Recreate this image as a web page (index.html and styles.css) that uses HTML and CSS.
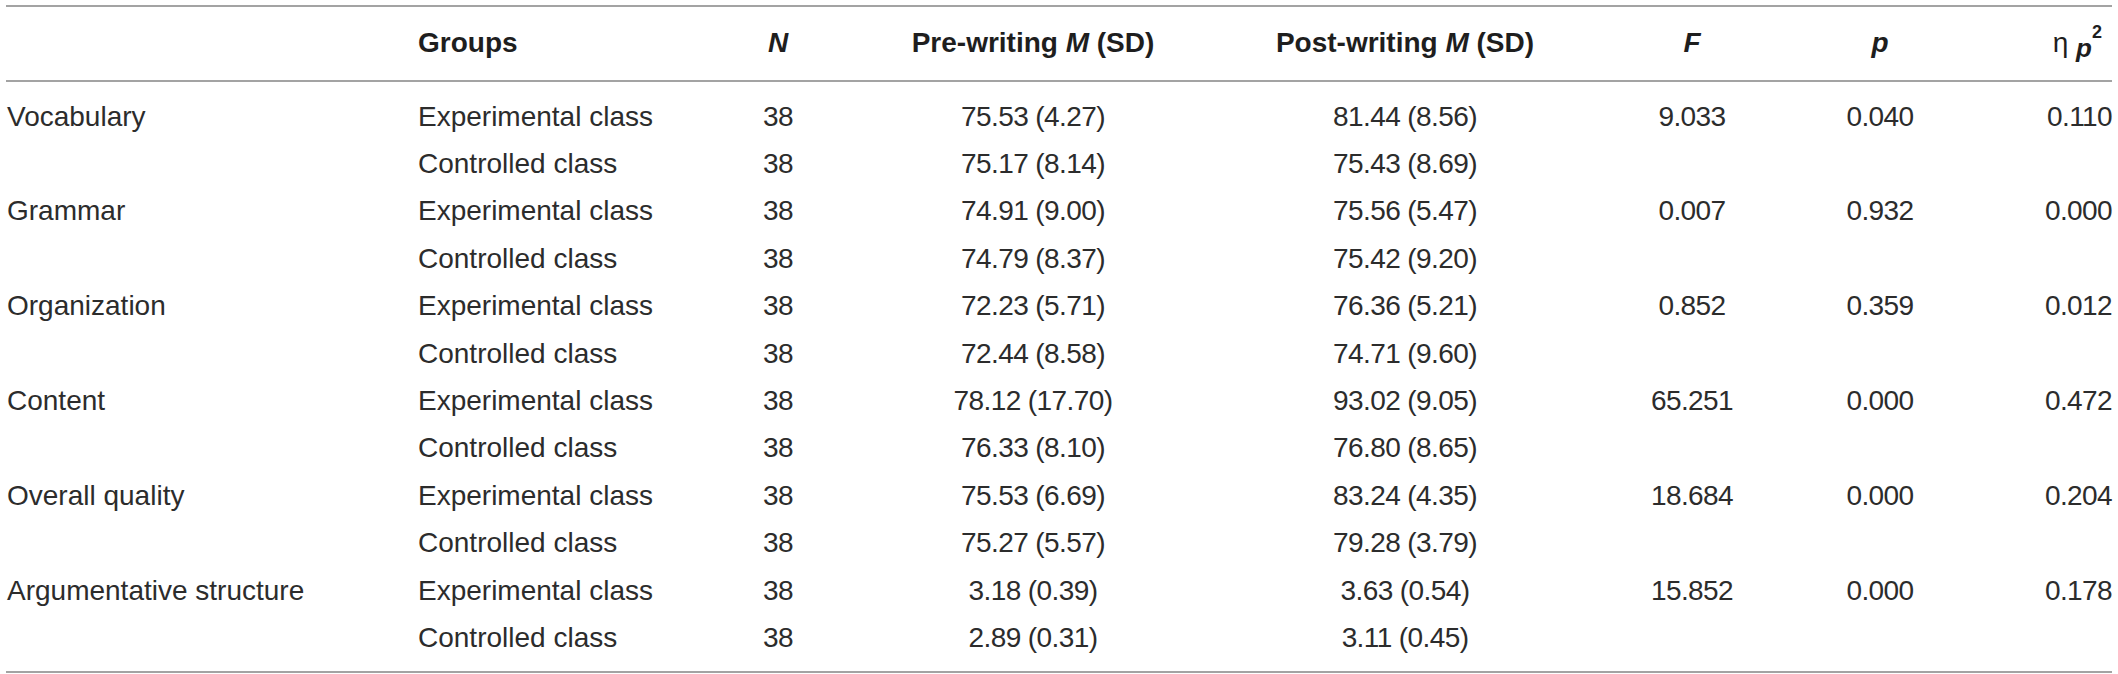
FILE: index.html
```html
<!DOCTYPE html>
<html lang="en">
<head>
<meta charset="utf-8">
<title>Table</title>
<link rel="stylesheet" href="styles.css">
</head>
<body>
<table class="stats">
  <colgroup>
    <col class="c-measure">
    <col class="c-group">
    <col class="c-n">
    <col class="c-pre">
    <col class="c-post">
    <col class="c-f">
    <col class="c-p">
    <col class="c-eta">
  </colgroup>
  <thead>
    <tr>
      <th class="left"></th>
      <th class="left">Groups</th>
      <th><i>N</i></th>
      <th>Pre-writing <i>M</i> (SD)</th>
      <th>Post-writing <i>M</i> (SD)</th>
      <th><i>F</i></th>
      <th><i>p</i></th>
      <th class="eta"><span class="eta-sym">η</span> <i class="sub">p</i><sup>2</sup></th>
    </tr>
  </thead>
  <tbody>
    <tr class="first">
      <td class="left">Vocabulary</td><td class="left">Experimental class</td><td class="num">38</td><td class="num">75.53 (4.27)</td><td class="num">81.44 (8.56)</td><td class="num">9.033</td><td class="num">0.040</td><td class="num last">0.110</td>
    </tr>
    <tr>
      <td class="left"></td><td class="left">Controlled class</td><td class="num">38</td><td class="num">75.17 (8.14)</td><td class="num">75.43 (8.69)</td><td class="num"></td><td class="num"></td><td class="num last"></td>
    </tr>
    <tr>
      <td class="left">Grammar</td><td class="left">Experimental class</td><td class="num">38</td><td class="num">74.91 (9.00)</td><td class="num">75.56 (5.47)</td><td class="num">0.007</td><td class="num">0.932</td><td class="num last">0.000</td>
    </tr>
    <tr>
      <td class="left"></td><td class="left">Controlled class</td><td class="num">38</td><td class="num">74.79 (8.37)</td><td class="num">75.42 (9.20)</td><td class="num"></td><td class="num"></td><td class="num last"></td>
    </tr>
    <tr>
      <td class="left">Organization</td><td class="left">Experimental class</td><td class="num">38</td><td class="num">72.23 (5.71)</td><td class="num">76.36 (5.21)</td><td class="num">0.852</td><td class="num">0.359</td><td class="num last">0.012</td>
    </tr>
    <tr>
      <td class="left"></td><td class="left">Controlled class</td><td class="num">38</td><td class="num">72.44 (8.58)</td><td class="num">74.71 (9.60)</td><td class="num"></td><td class="num"></td><td class="num last"></td>
    </tr>
    <tr>
      <td class="left">Content</td><td class="left">Experimental class</td><td class="num">38</td><td class="num">78.12 (17.70)</td><td class="num">93.02 (9.05)</td><td class="num">65.251</td><td class="num">0.000</td><td class="num last">0.472</td>
    </tr>
    <tr>
      <td class="left"></td><td class="left">Controlled class</td><td class="num">38</td><td class="num">76.33 (8.10)</td><td class="num">76.80 (8.65)</td><td class="num"></td><td class="num"></td><td class="num last"></td>
    </tr>
    <tr>
      <td class="left">Overall quality</td><td class="left">Experimental class</td><td class="num">38</td><td class="num">75.53 (6.69)</td><td class="num">83.24 (4.35)</td><td class="num">18.684</td><td class="num">0.000</td><td class="num last">0.204</td>
    </tr>
    <tr>
      <td class="left"></td><td class="left">Controlled class</td><td class="num">38</td><td class="num">75.27 (5.57)</td><td class="num">79.28 (3.79)</td><td class="num"></td><td class="num"></td><td class="num last"></td>
    </tr>
    <tr>
      <td class="left">Argumentative structure</td><td class="left">Experimental class</td><td class="num">38</td><td class="num">3.18 (0.39)</td><td class="num">3.63 (0.54)</td><td class="num">15.852</td><td class="num">0.000</td><td class="num last">0.178</td>
    </tr>
    <tr class="final">
      <td class="left"></td><td class="left">Controlled class</td><td class="num">38</td><td class="num">2.89 (0.31)</td><td class="num">3.11 (0.45)</td><td class="num"></td><td class="num"></td><td class="num last"></td>
    </tr>
  </tbody>
</table>
</body>
</html>
```

FILE: styles.css
```css
html, body {
  margin: 0;
  padding: 0;
  background: #ffffff;
}

body {
  font-family: "Liberation Sans", Arial, Helvetica, sans-serif;
  color: #2c2c2c;
}

.stats {
  margin: 5px 0 0 6px;
  width: 2106px;
  table-layout: fixed;
  border-collapse: separate;
  border-spacing: 0;
  font-size: 28px;
  line-height: 47.4px;
}

.c-measure { width: 411px; }
.c-group { width: 301px; }
.c-n { width: 120px; }
.c-pre { width: 390px; }
.c-post { width: 354px; }
.c-f { width: 220px; }
.c-p { width: 156px; }
.c-eta { width: 154px; }

.stats th,
.stats td {
  padding: 0;
  text-align: center;
  white-space: nowrap;
  vertical-align: baseline;
}

.stats th {
  font-weight: bold;
  color: #1e1e1e;
  padding-top: 11.6px;
  padding-bottom: 10px;
  border-top: 2px solid #a3a3a3;
  border-bottom: 2px solid #a3a3a3;
}

.stats .left {
  text-align: left;
  padding-left: 1px;
}

.stats td.num {
  letter-spacing: -0.6px;
}

.stats td.last {
  text-align: right;
}

.stats th.eta {
  text-align: right;
  padding-right: 10px;
}

.eta-sym {
  font-weight: normal;
}

.sub {
  position: relative;
  top: 5px;
  font-size: 26px;
}

.stats sup {
  font-size: 18px;
  vertical-align: 0;
  position: relative;
  top: -14px;
}

.stats tr.first td {
  padding-top: 10.6px;
}

.stats tr.final td {
  padding-bottom: 10px;
  border-bottom: 2px solid #a3a3a3;
}
```
